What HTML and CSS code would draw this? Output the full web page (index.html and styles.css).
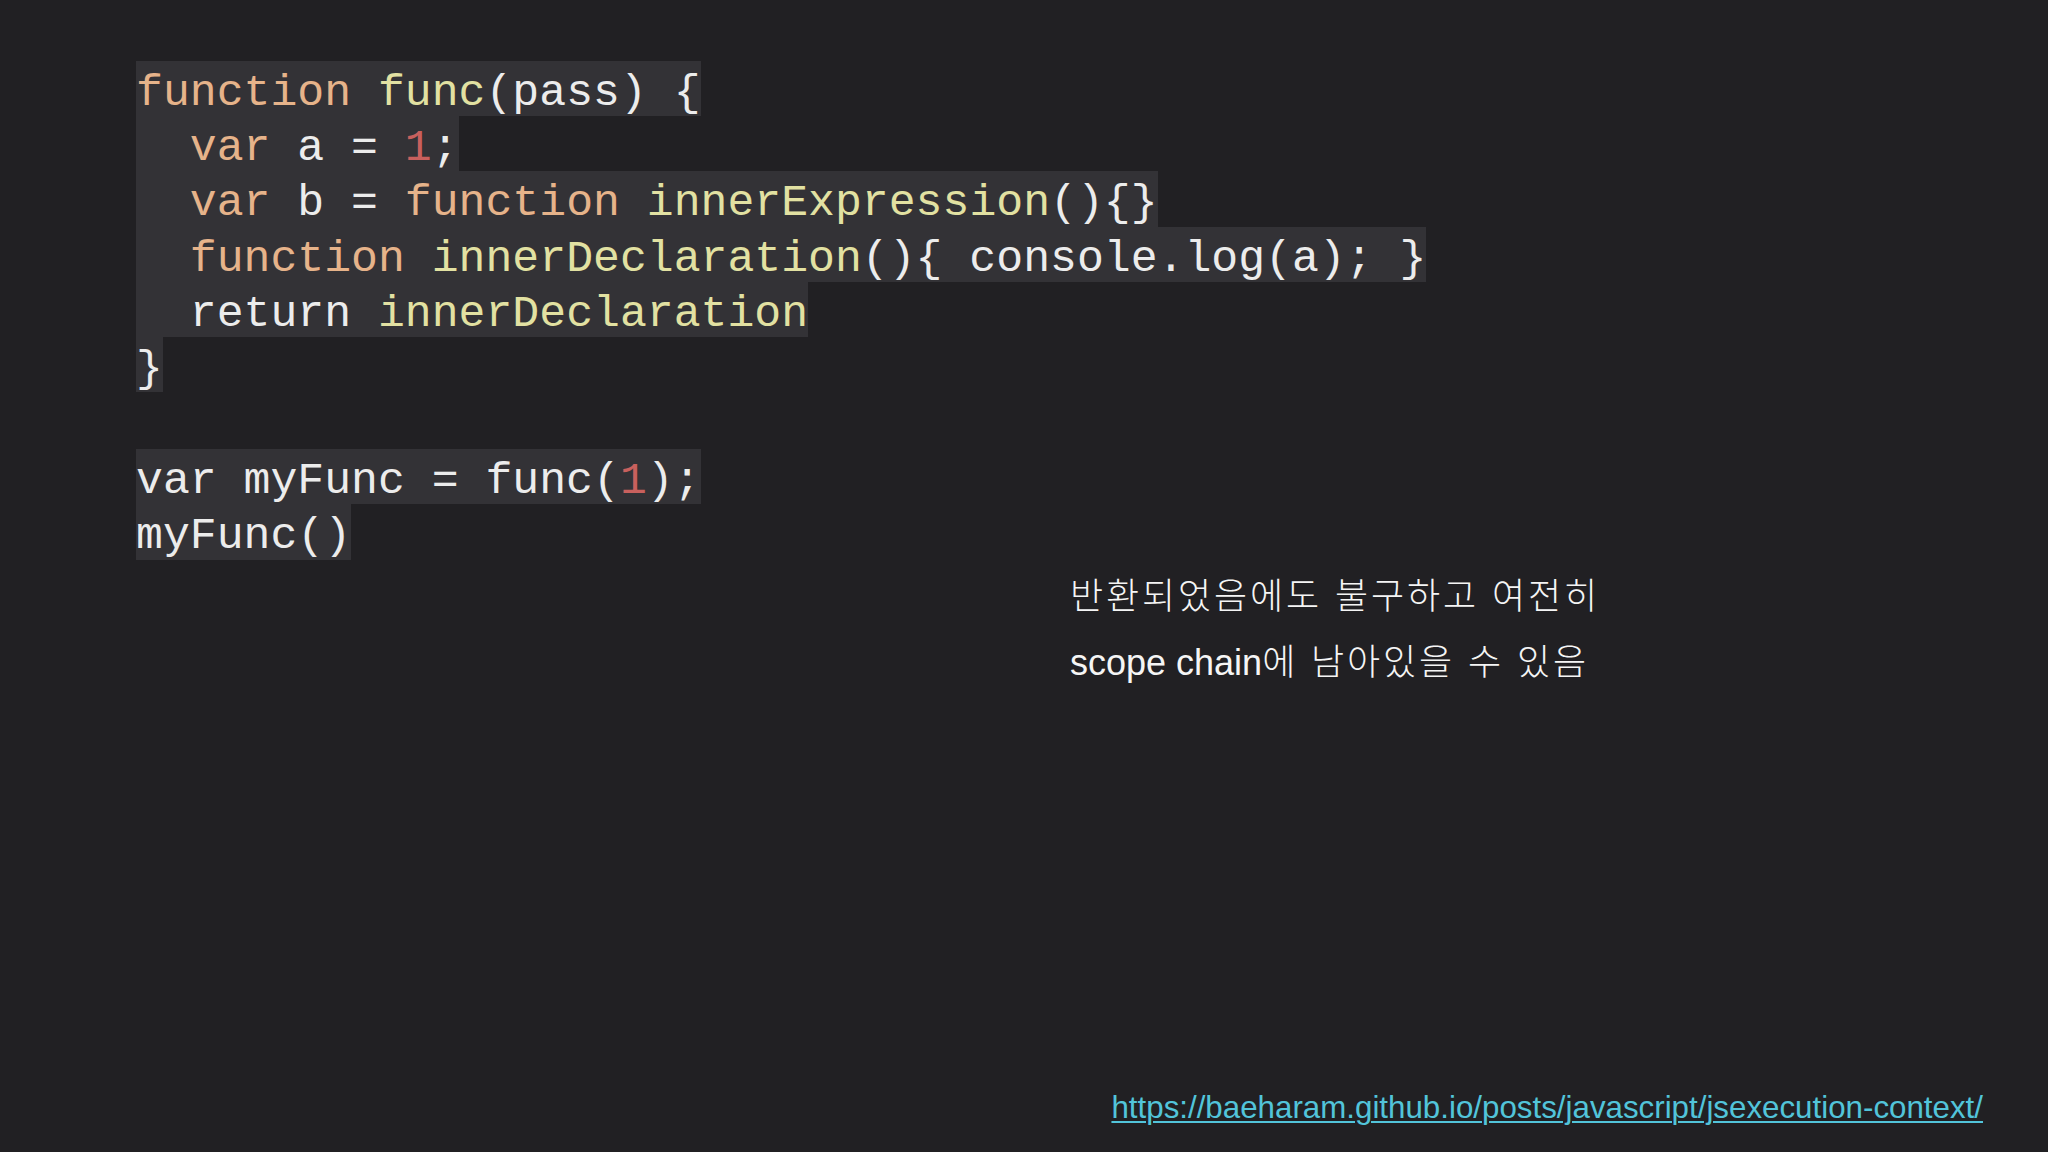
FILE: index.html
```html
<!DOCTYPE html>
<html lang="ko">
<head>
<meta charset="utf-8">
<title>Closure</title>
<link rel="stylesheet" href="styles.css">
</head>
<body>
<main class="slide">
  <section class="code">
    <div class="line"><span class="kw">function</span> <span class="fn">func</span>(pass) {</div>
    <div class="line">  <span class="kw">var</span> a = <span class="num">1</span>;</div>
    <div class="line">  <span class="kw">var</span> b = <span class="kw">function</span> <span class="fn">innerExpression</span>(){}</div>
    <div class="line">  <span class="kw">function</span> <span class="fn">innerDeclaration</span>(){ console.log(a); }</div>
    <div class="line">  return <span class="fn">innerDeclaration</span></div>
    <div class="line">}</div>
    <div class="blank"></div>
    <div class="line">var myFunc = func(<span class="num">1</span>);</div>
    <div class="line">myFunc()</div>
  </section>
  <section class="note">
    <p class="note-line"><span class="ko">반환되었음에도 불구하고 여전히</span></p>
    <p class="note-line"><span class="latin">scope chain</span><span class="ko">에 남아있을 수 있음</span></p>
  </section>
  <footer class="footer">
    <a class="ref" href="#">https://baeharam.github.io/posts/javascript/jsexecution-context/</a>
  </footer>
</main>
</body>
</html>
```
FILE: styles.css
```css
html, body {
  margin: 0;
  padding: 0;
  background: #212023;
}

.slide {
  width: 2048px;
  height: 1152px;
  display: flex;
  flex-direction: column;
  box-sizing: border-box;
  padding-top: 61px;
}

.code {
  padding-left: 136px;
  font-family: "Courier New", "Nimbus Mono PS", "Nimbus Mono L", "FreeMono", "Liberation Mono", monospace;
  font-size: 44.8px;
  color: #ececec;
}

.line {
  width: fit-content;
  white-space: pre;
  background: #333236;
  height: 55.2px;
  box-sizing: border-box;
  padding-top: 9px;
  line-height: 46.2px;
}

.blank {
  height: 57px;
}

.kw { color: #e6b38a; }
.fn { color: #e2e1a2; }
.num { color: #c8605d; }

.note {
  margin-left: 1070px;
  margin-top: 4px;
  font-family: "Liberation Sans", "Noto Sans CJK KR", sans-serif;
  font-size: 36px;
  font-weight: 300;
  color: #f5f5f5;
}

.note-line {
  margin: 0;
  line-height: 66px;
  white-space: nowrap;
}

.ko {
  letter-spacing: 2.9px;
}

.latin {
  font-weight: 400;
}

.footer {
  margin-top: auto;
  align-self: flex-end;
  padding-right: 65px;
  padding-bottom: 26px;
}

.ref {
  font-family: "Liberation Sans", Arial, sans-serif;
  font-size: 31.3px;
  line-height: 36px;
  color: #52c4da;
  text-decoration: underline;
  text-decoration-thickness: 2px;
  text-underline-offset: 3px;
}
```
